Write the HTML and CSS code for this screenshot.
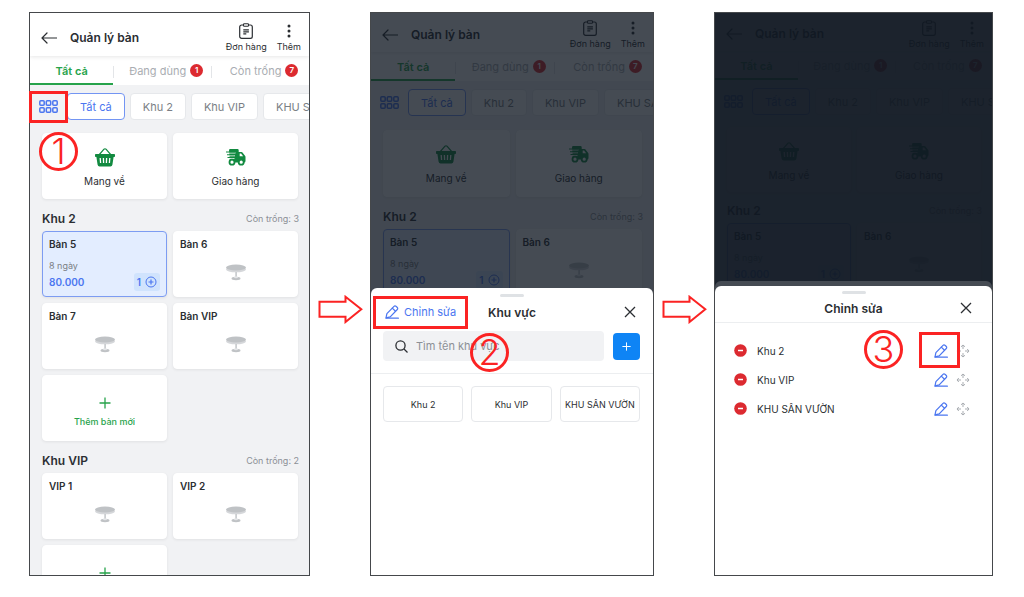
FILE: index.html
```html
<!DOCTYPE html>
<html lang="vi">
<head>
    <meta charset="UTF-8">
    <meta name="viewport" content="width=device-width, initial-scale=1.0">
    <title>Quản lý bàn - Chỉnh sửa khu vực</title>
    <link rel="stylesheet" href="styles.css">
</head>
<body>

    <!-- Shared icons -->
    <svg class="icon-defs" aria-hidden="true">
        <symbol id="icon-back" viewBox="0 0 16 12">
            <path d="M15.5 6H1M6 1L1 6l5 5" fill="none" stroke="currentColor" stroke-width="1.2" stroke-linecap="round" stroke-linejoin="round"/>
        </symbol>
        <symbol id="icon-order" viewBox="0 0 14 16">
            <path d="M4.5 2H2.6A1.9 1.9 0 0 0 .7 3.900v9.500A1.900 1.900 0 0 0 2.600 15.300h8.800a1.900 1.900 0 0 0 1.900-1.900V3.900A1.900 1.900 0 0 0 11.400 2H9.500" fill="none" stroke="currentColor" stroke-width="1.200"/>
            <rect x="4.500" y="0.700" width="5" height="2.600" rx="0.800" fill="none" stroke="currentColor" stroke-width="1.100"/>
            <path d="M4.300 6.800h5.600M4.300 8.800h5.600M4.300 10.800h3" fill="none" stroke="currentColor" stroke-width="1.200"/>
        </symbol>
        <symbol id="icon-more" viewBox="0 0 14 16">
            <circle cx="7" cy="3" r="1.500" fill="currentColor"/>
            <circle cx="7" cy="8" r="1.500" fill="currentColor"/>
            <circle cx="7" cy="13" r="1.500" fill="currentColor"/>
        </symbol>
        <symbol id="icon-grid" viewBox="0 0 19 13">
            <g fill="none" stroke="currentColor" stroke-width="1.500">
                <rect x="0.800" y="0.800" width="4.400" height="4.400" rx="1"/>
                <rect x="7.300" y="0.800" width="4.400" height="4.400" rx="1"/>
                <rect x="13.800" y="0.800" width="4.400" height="4.400" rx="1"/>
                <rect x="0.800" y="7.800" width="4.400" height="4.400" rx="1"/>
                <rect x="7.300" y="7.800" width="4.400" height="4.400" rx="1"/>
                <rect x="13.800" y="7.800" width="4.400" height="4.400" rx="1"/>
            </g>
        </symbol>
        <symbol id="icon-basket" viewBox="0 0 20 20">
            <path d="M3.500 8.500L9 2.200a1.400 1.400 0 0 1 2 0l5.500 6.300" fill="none" stroke="currentColor" stroke-width="1.200"/>
            <path d="M0.800 7h18.400a.8.800 0 0 1 .8.800v1.500a.8.800 0 0 1-.8.800h-.6l-1.200 7.700a2 2 0 0 1-2 1.700H4.600a2 2 0 0 1-2-1.700L1.400 10.100H.8a.8.800 0 0 1-.8-.8V7.800A.8.800 0 0 1 .8 7z" fill="currentColor"/>
            <path class="cutout" d="M5.200 11l.4 5M8.400 11l.2 5M11.600 11l-.2 5M14.800 11l-.4 5" fill="none" stroke-width="1.300"/>
        </symbol>
        <symbol id="icon-truck" viewBox="0 0 20 18">
            <path d="M3 2.200A1.200 1.200 0 0 1 4.200 1h7.300a1.200 1.200 0 0 1 1.200 1.200V4h2.800a1.200 1.200 0 0 1 1 .5l2.700 3.600a1.500 1.500 0 0 1 .3.900v4a1.500 1.500 0 0 1-1.500 1.500H4z" fill="currentColor"/>
            <path class="cutout" d="M0 5h9.500M1 7.800h8M2 10.600h6.500" fill="none" stroke-width="0.900"/>
            <path d="M0 4h9M1 6.700h7.500M1.500 9.500H8" fill="none" stroke="currentColor" stroke-width="1.100"/>
            <circle cx="6" cy="14.200" r="2.500" class="wheel" stroke="currentColor" stroke-width="1.800"/>
            <circle cx="15.200" cy="14.200" r="2.500" class="wheel" stroke="currentColor" stroke-width="1.800"/>
            <path class="wheel" d="M13.700 5.500h1.400l2 2.800h-3.400z"/>
        </symbol>
        <symbol id="icon-table" viewBox="0 0 20 17">
            <ellipse cx="10" cy="5.300" rx="10" ry="3" fill="#d5d7da"/>
            <ellipse cx="10" cy="3.500" rx="10" ry="3" fill="#bfc2c5"/>
            <path d="M9.300 8h1.600v6H9.300z" fill="#c6c9cc"/>
            <ellipse cx="10" cy="14.500" rx="4.500" ry="1.700" fill="#bfc2c5"/>
            <ellipse cx="10" cy="13.300" rx="2" ry="1" fill="#e4e6e8"/>
        </symbol>
        <symbol id="icon-plus" viewBox="0 0 12 12">
            <path d="M6 0.500v11M0.500 6h11" fill="none" stroke="currentColor" stroke-width="1.300"/>
        </symbol>
        <symbol id="icon-plus-circle" viewBox="0 0 12 12">
            <circle cx="6" cy="6" r="5" fill="none" stroke="currentColor"/>
            <path d="M6 3.500v5M3.500 6h5" fill="none" stroke="currentColor" stroke-width="1.200"/>
        </symbol>
        <symbol id="icon-pencil" viewBox="0 0 14 14">
            <g fill="none" stroke="currentColor" stroke-width="1.200" stroke-linejoin="round" stroke-linecap="round">
                <path d="M1 12.900l.9-4.200L9 1.300a1.400 1.400 0 0 1 2 0l1.300 1.200a1.400 1.400 0 0 1 0 2L5.200 11.900z"/>
                <path d="M7.300 3.100l3.200 3.100M1 13.200h12.400"/>
            </g>
        </symbol>
        <symbol id="icon-close" viewBox="0 0 12 12">
            <path d="M1 1l10 10M11 1L1 11" fill="none" stroke="currentColor" stroke-width="1.300"/>
        </symbol>
        <symbol id="icon-search" viewBox="0 0 13 13">
            <circle cx="5.500" cy="5.500" r="4.600" fill="none" stroke="currentColor" stroke-width="1.300"/>
            <path d="M9 9l3.500 3.500" stroke="currentColor" stroke-width="1.300"/>
        </symbol>
        <symbol id="icon-minus" viewBox="0 0 13 13">
            <circle cx="6.500" cy="6.500" r="6.300" fill="#dc2a30"/>
            <path d="M4 6.500h5" stroke="#ffffff" stroke-width="1.500"/>
        </symbol>
        <symbol id="icon-move" viewBox="0 0 14 14">
            <path d="M7 1v4M7 9v4M1 7h4M9 7h4M5 2.800L7 1l2 1.800M5 11.200L7 13l2-1.800M2.800 5L1 7l1.800 2M11.200 5L13 7l-1.800 2" fill="none" stroke="currentColor"/>
        </symbol>
        <symbol id="icon-arrow" viewBox="0 0 45 29">
            <path d="M1.500 6.800h26V1.800L43.300 14.300 27.500 27V21.800h-26z" fill="#ffffff" stroke="#fb2323" stroke-width="2"/>
        </symbol>
    </svg>

    <!-- Table management screen, used in all three steps -->
    <template id="tableScreen">
        <div class="screen">
            <header class="app-header">
                <button type="button" class="plain-button" aria-label="Quay lại"><svg class="icon-back"><use href="#icon-back"/></svg></button>
                <h1>Quản lý bàn</h1>
                <button type="button" class="plain-button header-action"><svg><use href="#icon-order"/></svg>Đơn hàng</button>
                <button type="button" class="plain-button header-action"><svg><use href="#icon-more"/></svg>Thêm</button>
            </header>
            <nav class="tabs">
                <button type="button" class="tab active">Tất cả</button>
                <button type="button" class="tab">Đang dùng <span class="badge">1</span></button>
                <button type="button" class="tab">Còn trống <span class="badge">7</span></button>
            </nav>
            <div class="areas">
                <button type="button" class="plain-button area-list" aria-label="Khu vực"><svg><use href="#icon-grid"/></svg></button>
                <button type="button" class="area active">Tất cả</button>
                <button type="button" class="area">Khu 2</button>
                <button type="button" class="area">Khu VIP</button>
                <button type="button" class="area">KHU SÂN VƯỜN</button>
            </div>
            <div class="card-grid">
                <button type="button" class="card service"><svg><use href="#icon-basket"/></svg>Mang về</button>
                <button type="button" class="card service"><svg><use href="#icon-truck"/></svg>Giao hàng</button>
            </div>
            <div class="area-title">
                <h2>Khu 2</h2>
                <span>Còn trống: 3</span>
            </div>
            <div class="card-grid">
                <div class="card table in-use">
                    <h3>Bàn 5</h3>
                    <div class="time">8 ngày</div>
                    <div class="bill">
                        <span>80.000</span>
                        <button type="button" class="guest">1 <svg><use href="#icon-plus-circle"/></svg></button>
                    </div>
                </div>
                <div class="card table"><h3>Bàn 6</h3><svg><use href="#icon-table"/></svg></div>
                <div class="card table"><h3>Bàn 7</h3><svg><use href="#icon-table"/></svg></div>
                <div class="card table"><h3>Bàn VIP</h3><svg><use href="#icon-table"/></svg></div>
                <button type="button" class="card add-table"><svg><use href="#icon-plus"/></svg>Thêm bàn mới</button>
            </div>
            <div class="area-title">
                <h2>Khu VIP</h2>
                <span>Còn trống: 2</span>
            </div>
            <div class="card-grid">
                <div class="card table"><h3>VIP 1</h3><svg><use href="#icon-table"/></svg></div>
                <div class="card table"><h3>VIP 2</h3><svg><use href="#icon-table"/></svg></div>
                <button type="button" class="card add-table" aria-label="Thêm bàn mới"><svg><use href="#icon-plus"/></svg></button>
            </div>
        </div>
    </template>

    <main class="steps">
        <!-- Step 1: open the area list -->
        <section class="step step-one">
            <div class="phone" data-screen></div>
            <div class="highlight"></div>
            <div class="number">1</div>
        </section>

        <svg class="next-arrow"><use href="#icon-arrow"/></svg>

        <!-- Step 2: choose edit -->
        <section class="step step-two">
            <div class="phone compact" data-screen>
                <div class="overlay"></div>
                <div class="sheet">
                    <div class="handle"></div>
                    <div class="sheet-header">
                        <button type="button" class="plain-button edit-link"><svg><use href="#icon-pencil"/></svg>Chỉnh sửa</button>
                        <h2>Khu vực</h2>
                        <button type="button" class="plain-button close" aria-label="Đóng"><svg><use href="#icon-close"/></svg></button>
                    </div>
                    <div class="search-row">
                        <label class="search-box">
                            <svg><use href="#icon-search"/></svg>
                            <input type="text" placeholder="Tìm tên khu vực" aria-label="Tìm tên khu vực">
                        </label>
                        <button type="button" class="add-area" aria-label="Thêm khu vực"><svg><use href="#icon-plus"/></svg></button>
                    </div>
                    <div class="area-options">
                        <button type="button">Khu 2</button>
                        <button type="button">Khu VIP</button>
                        <button type="button">KHU SÂN VƯỜN</button>
                    </div>
                </div>
            </div>
            <div class="highlight"></div>
            <div class="number">2</div>
        </section>

        <svg class="next-arrow"><use href="#icon-arrow"/></svg>

        <!-- Step 3: rename the area -->
        <section class="step step-three">
            <div class="phone compact small" data-screen>
                <div class="overlay"></div>
                <div class="sheet sheet-behind"></div>
                <div class="overlay"></div>
                <div class="sheet">
                    <div class="handle"></div>
                    <div class="sheet-header">
                        <h2>Chỉnh sửa</h2>
                        <button type="button" class="plain-button close" aria-label="Đóng"><svg><use href="#icon-close"/></svg></button>
                    </div>
                    <ul class="edit-list">
                        <li>
                            <button type="button" class="plain-button" aria-label="Xóa Khu 2"><svg class="icon-minus"><use href="#icon-minus"/></svg></button>
                            <span>Khu 2</span>
                            <button type="button" class="plain-button edit" aria-label="Sửa Khu 2"><svg><use href="#icon-pencil"/></svg></button>
                            <button type="button" class="plain-button move" aria-label="Di chuyển Khu 2"><svg><use href="#icon-move"/></svg></button>
                        </li>
                        <li>
                            <button type="button" class="plain-button" aria-label="Xóa Khu VIP"><svg class="icon-minus"><use href="#icon-minus"/></svg></button>
                            <span>Khu VIP</span>
                            <button type="button" class="plain-button edit" aria-label="Sửa Khu VIP"><svg><use href="#icon-pencil"/></svg></button>
                            <button type="button" class="plain-button move" aria-label="Di chuyển Khu VIP"><svg><use href="#icon-move"/></svg></button>
                        </li>
                        <li>
                            <button type="button" class="plain-button" aria-label="Xóa KHU SÂN VƯỜN"><svg class="icon-minus"><use href="#icon-minus"/></svg></button>
                            <span>KHU SÂN VƯỜN</span>
                            <button type="button" class="plain-button edit" aria-label="Sửa KHU SÂN VƯỜN"><svg><use href="#icon-pencil"/></svg></button>
                            <button type="button" class="plain-button move" aria-label="Di chuyển KHU SÂN VƯỜN"><svg><use href="#icon-move"/></svg></button>
                        </li>
                    </ul>
                </div>
            </div>
            <div class="highlight"></div>
            <div class="number">3</div>
        </section>
    </main>

    <script src="script.js"></script>
</body>
</html>
```

FILE: styles.css
```css
* {
    box-sizing: border-box;
}

body {
    margin: 0;
    background-color: #ffffff;
    font-family: Inter, "Noto Sans", sans-serif;
    font-size: 12px;
    color: #2b2e32;
}

h1, h2, h3, ul {
    margin: 0;
    padding: 0;
}

button, input {
    font-family: inherit;
    color: inherit;
}

button {
    cursor: pointer;
}

svg {
    display: block;
    flex: none;
}

.icon-defs {
    position: absolute;
    width: 0;
    height: 0;
}

.plain-button {
    padding: 0;
    border: none;
    background: none;
}

/* Page layout */
.steps {
    display: grid;
    grid-template-columns: 281fr 60px 284fr 60px 279fr;
    height: 100vh;
    padding: 12px 31px 21px 29px;
}

.step {
    position: relative;
    min-width: 0;
    min-height: 0;
}

.next-arrow {
    width: 45px;
    height: 29px;
    margin-top: 283px;
    justify-self: center;
}

.phone {
    --header-height: 43px;
    --header-space: 6px;
    --card-height: 66px;
    --title-height: 32px;
    --areas-bottom: 13px;
    position: relative;
    height: 100%;
    overflow: hidden;
    border: 1px solid #45484b;
    background-color: #f1f2f4;
}

.phone.compact {
    --header-height: 39px;
    --header-space: 4px;
    --card-height: 67px;
    --areas-bottom: 14px;
}

.phone.small {
    --header-height: 38px;
    --card-height: 65px;
    --title-height: 31px;
    --areas-bottom: 12px;
}

/* App header */
.app-header {
    position: relative;
    display: flex;
    align-items: center;
    height: var(--header-height);
    padding: var(--header-space) 8px 0 11px;
    background-color: #ffffff;
    box-shadow: 0 1px 4px rgba(0, 0, 0, 0.1);
}

.icon-back {
    width: 16px;
    height: 12px;
}

.app-header h1 {
    flex: 1;
    margin-left: 13px;
    font-size: 12px;
    font-weight: 600;
    line-height: 16px;
}

.header-action {
    display: flex;
    flex-direction: column;
    align-items: center;
    margin: 2px 0 0 10px;
    font-size: 9px;
    line-height: 14px;
}

.header-action svg {
    width: 14px;
    height: 16px;
    margin-bottom: 1px;
}

/* Status tabs */
.tabs {
    display: flex;
    height: 29px;
    background-color: #ffffff;
}

.tab {
    display: flex;
    flex: 96;
    align-items: center;
    justify-content: center;
    gap: 4px;
    padding: 2px 0 0;
    border: none;
    border-bottom: 2px solid transparent;
    background: none;
    font-size: 11px;
    white-space: nowrap;
    color: #a9adb2;
}

.tab.active {
    flex: 89;
    border-bottom-color: #27a34b;
    font-weight: 600;
    color: #27a34b;
}

.tab + .tab {
    padding-left: 8px;
    background: linear-gradient(#e3e5e8, #e3e5e8) left 10px / 1px 12px no-repeat;
}

.badge {
    width: 13px;
    height: 13px;
    border-radius: 50%;
    background-color: #dc2a30;
    font-size: 8px;
    font-weight: 600;
    line-height: 13px;
    text-align: center;
    color: #ffffff;
}

/* Area filter */
.areas {
    display: flex;
    align-items: center;
    gap: 5px;
    padding: 8px 0 var(--areas-bottom) 9px;
    overflow: hidden;
}

.area-list {
    margin-right: 4px;
    color: #4b76f0;
}

.area-list svg {
    width: 19px;
    height: 13px;
}

.area {
    flex: none;
    height: 27px;
    padding: 0 12px;
    border: 1px solid #e6e8eb;
    border-radius: 4px;
    background-color: #ffffff;
    font-size: 11px;
    color: #7b7f85;
}

.area.active {
    border-color: #7395f3;
    color: #4b76f0;
}

/* Cards */
.card-grid {
    display: grid;
    grid-template-columns: 1fr 1fr;
    grid-auto-rows: var(--card-height);
    gap: 6px;
    padding: 0 11px 0 12px;
}

.card {
    padding: 6px;
    border: 1px solid #ffffff;
    border-radius: 4px;
    background-color: #ffffff;
    box-shadow: 0 1px 3px rgba(0, 0, 0, 0.07);
}

.service,
.add-table {
    display: flex;
    flex-direction: column;
    align-items: center;
    font-size: 10px;
    line-height: 14px;
}

.service {
    padding-top: 13px;
}

.service svg {
    width: 20px;
    height: 20px;
    margin-bottom: 7px;
    color: #128a40;
}

.cutout {
    stroke: #ffffff;
}

.wheel {
    fill: #ffffff;
}

.add-table {
    padding-top: 21px;
    font-size: 9px;
    font-weight: 500;
    color: #27a34b;
}

.add-table svg {
    width: 12px;
    height: 12px;
    margin-bottom: 6px;
}

.area-title {
    display: flex;
    align-items: center;
    justify-content: space-between;
    height: var(--title-height);
    padding: 6px 10px 0 12px;
}

.area-title h2 {
    font-size: 12px;
    font-weight: 600;
}

.area-title span {
    font-size: 9px;
    color: #8c9096;
}

.table h3 {
    font-size: 10px;
    font-weight: 600;
    line-height: 12px;
}

.table > svg {
    width: 20px;
    height: 17px;
    margin: 14px auto 0;
}

.table.in-use {
    border-color: #7d9cf2;
    background-color: #e3edff;
}

.time {
    margin-top: 9px;
    font-size: 9px;
    line-height: 14px;
    color: #7b7f85;
}

.bill {
    display: flex;
    align-items: center;
    justify-content: space-between;
    font-size: 10px;
    font-weight: 600;
    color: #4b76f0;
}

.guest {
    display: flex;
    align-items: center;
    gap: 4px;
    height: 18px;
    padding: 0 3px;
    border: none;
    border-radius: 3px;
    background-color: #d0e3fd;
    font-size: 10px;
    font-weight: 600;
}

.guest svg {
    width: 12px;
    height: 12px;
}

/* Bottom sheets */
.overlay {
    position: absolute;
    inset: 0;
    background-color: rgba(17, 24, 35, 0.78);
}

.sheet {
    position: absolute;
    right: 0;
    bottom: 0;
    left: 0;
    height: 51%;
    padding-top: 6px;
    border-radius: 6px 6px 0 0;
    background-color: #ffffff;
}

.small .sheet {
    height: 289px;
    padding-top: 5px;
}

.small .sheet-behind {
    height: 294px;
}

.handle {
    width: 24px;
    height: 3px;
    margin: 0 auto;
    border-radius: 2px;
    background-color: #dfe2e5;
}

.sheet-header {
    position: relative;
    display: flex;
    align-items: center;
    justify-content: center;
    height: 30px;
}

.sheet-header h2 {
    font-size: 12px;
    font-weight: 600;
}

.edit-link {
    position: absolute;
    left: 14px;
    display: flex;
    align-items: center;
    gap: 5px;
    font-size: 11px;
    color: #4b76f0;
}

.edit-link svg {
    width: 14px;
    height: 14px;
}

.close {
    position: absolute;
    right: 17px;
}

.small .close {
    right: 20px;
}

.close svg {
    width: 12px;
    height: 12px;
}

.search-row {
    display: flex;
    align-items: center;
    gap: 9px;
    padding: 4px 13px 12px 12px;
    border-bottom: 1px solid #eceef0;
}

.search-box {
    display: flex;
    flex: 1;
    align-items: center;
    gap: 8px;
    min-width: 0;
    height: 30px;
    padding: 0 12px;
    border-radius: 4px;
    background-color: #f1f2f4;
}

.search-box svg {
    width: 13px;
    height: 13px;
}

.search-box input {
    flex: 1;
    min-width: 0;
    padding: 0;
    border: none;
    outline: none;
    background: none;
    font-size: 11px;
}

.search-box input::placeholder {
    color: #8c9096;
    opacity: 1;
}

.add-area {
    display: flex;
    flex: none;
    align-items: center;
    justify-content: center;
    width: 27px;
    height: 27px;
    padding: 0;
    border: none;
    border-radius: 4px;
    background-color: #0e84f5;
    color: #ffffff;
}

.add-area svg {
    width: 9px;
    height: 9px;
}

.area-options {
    display: grid;
    grid-template-columns: repeat(3, 1fr);
    gap: 8px;
    padding: 12px 13px 0 12px;
}

.area-options button {
    height: 36px;
    padding: 0;
    border: 1px solid #e6e8eb;
    border-radius: 4px;
    background-color: #ffffff;
    font-size: 9px;
    white-space: nowrap;
}

.small .sheet-header {
    height: 29px;
    border-bottom: 1px solid #eceef0;
}

.edit-list {
    padding: 13px 22px 0 19px;
    list-style: none;
}

.edit-list li {
    display: flex;
    align-items: center;
    height: 29px;
    font-size: 10px;
}

.edit-list span {
    flex: 1;
    margin-left: 10px;
}

.icon-minus {
    width: 13px;
    height: 13px;
}

.edit {
    margin-right: 8px;
    color: #4b76f0;
}

.edit svg,
.move svg {
    width: 14px;
    height: 14px;
}

.move {
    color: #a9adb2;
}

/* Guide marks drawn over the phones */
.highlight {
    position: absolute;
    border: 3px solid #fb2323;
}

.number {
    position: absolute;
    width: 39px;
    height: 39px;
    border: 3px solid #fb2323;
    border-radius: 50%;
    font-size: 36px;
    font-weight: 300;
    line-height: 33px;
    text-align: center;
    color: #fb2323;
}

.step-one .highlight {
    top: 79px;
    left: 0;
    width: 39px;
    height: 32px;
}

.step-one .number {
    top: 120px;
    left: 10px;
}

.step-two .highlight {
    top: 284px;
    left: 3px;
    width: 95px;
    height: 33px;
}

.step-two .number {
    top: 321px;
    left: 100px;
}

.step-three .highlight {
    top: 320px;
    right: 33px;
    width: 41px;
    height: 36px;
}

.step-three .number {
    top: 318px;
    right: 90px;
}
```

FILE: script.js
```javascript
// Put the table screen at the back of each phone
var template = document.getElementById("tableScreen");

document.querySelectorAll("[data-screen]").forEach(function (phone) {
    phone.prepend(template.content.cloneNode(true));
});
```
